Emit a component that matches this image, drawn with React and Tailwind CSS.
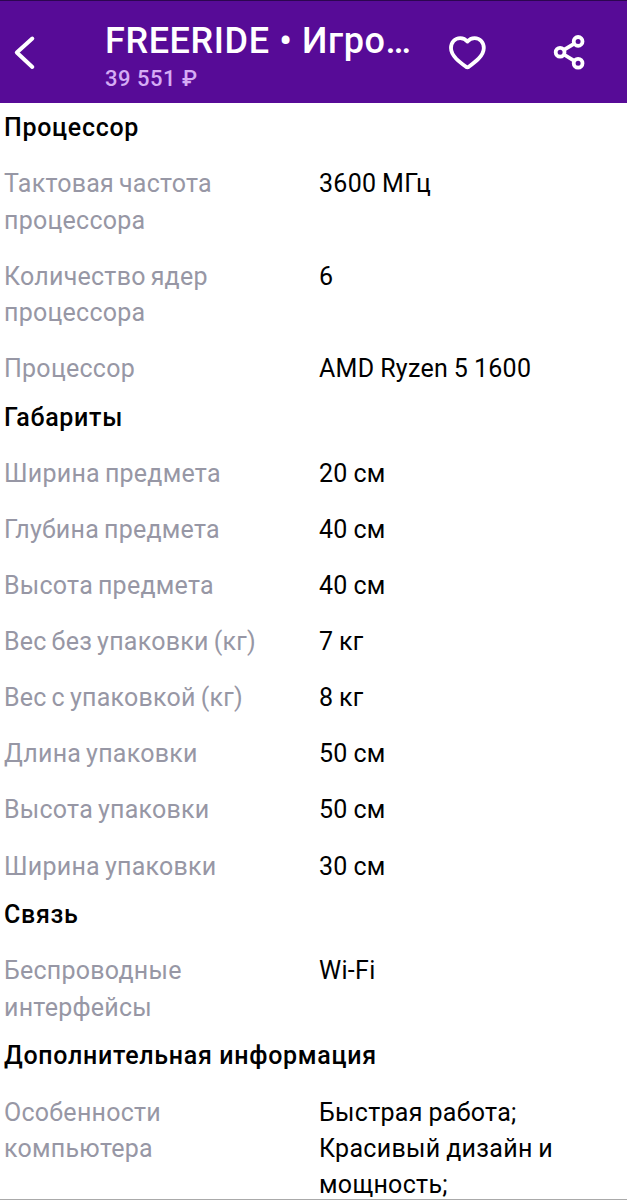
const sections = [
  {
    title: "Процессор",
    rows: [
      { label: "Тактовая частота процессора", value: "3600 МГц" },
      { label: "Количество ядер процессора", value: "6" },
      { label: "Процессор", value: "AMD Ryzen 5 1600" },
    ],
  },
  {
    title: "Габариты",
    rows: [
      { label: "Ширина предмета", value: "20 см" },
      { label: "Глубина предмета", value: "40 см" },
      { label: "Высота предмета", value: "40 см" },
      { label: "Вес без упаковки (кг)", value: "7 кг" },
      { label: "Вес с упаковкой (кг)", value: "8 кг" },
      { label: "Длина упаковки", value: "50 см" },
      { label: "Высота упаковки", value: "50 см" },
      { label: "Ширина упаковки", value: "30 см" },
    ],
  },
  {
    title: "Связь",
    rows: [{ label: "Беспроводные интерфейсы", value: "Wi-Fi" }],
  },
  {
    title: "Дополнительная информация",
    rows: [
      {
        label: "Особенности компьютера",
        value: "Быстрая работа; Красивый дизайн и мощность;",
      },
    ],
  },
];

function Header() {
  return (
    <header className="flex h-[103px] shrink-0 border-t border-[#2c0650] bg-[#570b97] text-white">
      <button className="flex w-[105px] items-center pl-3" aria-label="Назад">
        <svg
          className="h-9 w-6"
          viewBox="0 0 24 36"
          fill="none"
          stroke="currentColor"
          strokeWidth="4"
          strokeLinecap="round"
          strokeLinejoin="round"
        >
          <path d="M20.3 4.5 4.8 18.5 20.3 33" />
        </svg>
      </button>

      <div className="w-[310px] pt-[18px]">
        <h1 className="text-[36px] leading-[44px] font-medium tracking-[0.6px] whitespace-nowrap">
          FREERIDE • Игро…
        </h1>
        <p className="text-[22px] leading-[32px] font-medium tracking-[0.5px] text-[#d5acf5]">
          39 551 ₽
        </p>
      </div>

      <div className="flex items-center">
        <button className="ml-8 h-10 w-10" aria-label="В избранное">
          <svg
            className="h-10 w-10"
            viewBox="0 0 40 40"
            fill="none"
            stroke="currentColor"
            strokeWidth="3.8"
            strokeLinejoin="round"
          >
            <path d="M20.4 9.6C18.6 7.3 16 6.1 13.2 6.1 7.7 6.1 4 10.6 4 16.1c0 4.2 2 7.3 5.2 10.6 3.3 3.3 7 6 9.8 8.1.9.6 1.9.6 2.8 0 2.8-2.1 6.5-4.8 9.8-8.1 3.2-3.3 5.2-6.4 5.2-10.6 0-5.5-3.7-10-9.2-10-2.8 0-5.4 1.2-7.2 3.5Z" />
          </svg>
        </button>
        <button className="ml-[62px] h-10 w-10" aria-label="Поделиться">
          <svg
            className="h-10 w-10"
            viewBox="0 0 40 40"
            fill="none"
            stroke="currentColor"
            strokeWidth="3.8"
          >
            <circle cx="29.1" cy="9.4" r="4.4" />
            <circle cx="11.1" cy="20.2" r="4.4" />
            <circle cx="29.1" cy="31.3" r="4.4" />
            <path d="m14.9 17.9 10.4-6.2M14.9 22.5l10.4 6.4" />
          </svg>
        </button>
      </div>
    </header>
  );
}

function Section({ title, rows }) {
  return (
    <section className="mb-[12.8px]">
      <h2 className="font-medium tracking-[0.7px]">{title}</h2>
      {rows.map((row) => (
        <div key={row.label} className="flex pt-5">
          <p className="w-[315px] shrink-0 pr-12 tracking-[0.25px] [word-spacing:-1.5px] text-[#9797a5]">
            {row.label}
          </p>
          <p className="w-[250px] tracking-[0.3px] [word-spacing:-0.8px]">
            {row.value}
          </p>
        </div>
      ))}
    </section>
  );
}

function App() {
  return (
    <div className="flex h-[1200px] w-[627px] flex-col overflow-hidden border-b border-[#aaaaaa] bg-white font-['Roboto',sans-serif] text-black">
      <Header />
      <main className="min-h-0 flex-1 overflow-hidden pt-[7.4px] pl-1 text-[25px] leading-[36.1px]">
        {sections.map((section) => (
          <Section key={section.title} {...section} />
        ))}
      </main>
    </div>
  );
}

export default App;
